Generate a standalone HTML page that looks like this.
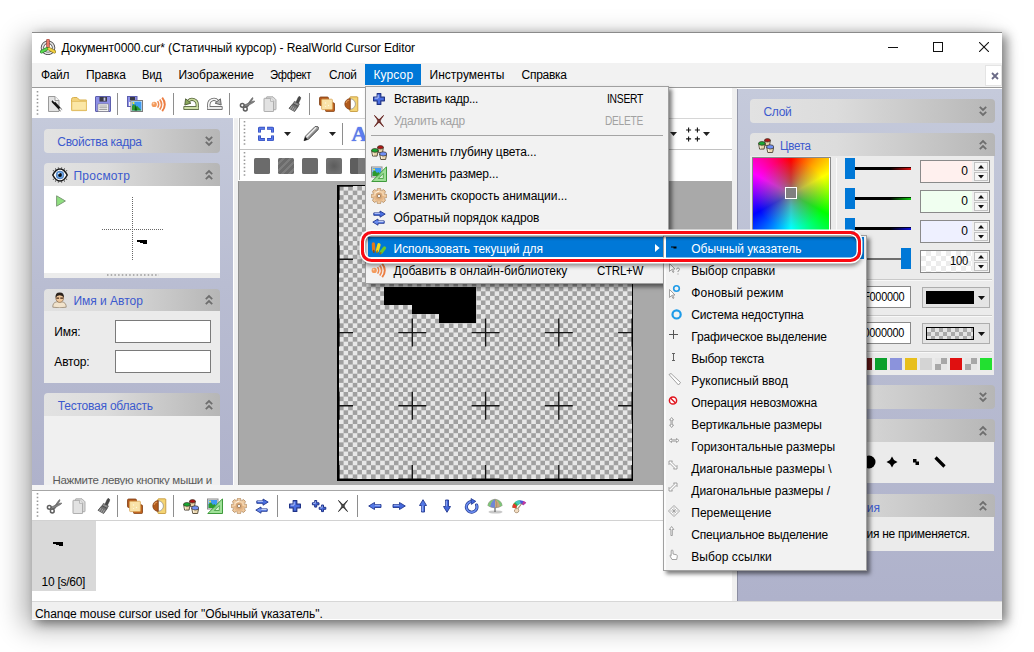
<!DOCTYPE html>
<html lang="ru"><head><meta charset="utf-8"><title>RealWorld Cursor Editor</title><style>
html,body{margin:0;padding:0;background:#fff;}
body{width:1034px;height:652px;overflow:hidden;position:relative;font-family:"Liberation Sans",sans-serif;}
.b{position:absolute;box-sizing:border-box;display:block;}
.t{position:absolute;white-space:nowrap;line-height:1;display:block;}
</style></head><body>
<div class="b" style="left:32px;top:32px;width:970px;height:587.5px;background:#fff;box-shadow:5px 3px 10px 0px rgba(0,0,0,.44),-8px 7px 26px 0px rgba(0,0,0,.33);"></div>
<div class="b" style="left:32px;top:32px;width:970px;height:1px;background:#8a8a8a;"></div>
<svg class="b" style="left:40.0px;top:39.0px" width="16" height="16" viewBox="0 0 16 16"><circle cx="8" cy="8.800" r="5.600" fill="none" stroke="#484848" stroke-width="3.400"/><circle cx="8" cy="8.800" r="5.600" fill="none" stroke="#e4e4e4" stroke-width="1.700"/><path d="M8 8v-6.600" stroke="#8a3a30" stroke-width="3.400" stroke-linecap="round"/><path d="M8 8v-6.600" stroke="#e87868" stroke-width="2.300" stroke-linecap="round"/><path d="M7 9.800l-5.400 3" stroke="#2f7a2a" stroke-width="3.300" stroke-linecap="round"/><path d="M7 9.800l-5.400 3" stroke="#58d850" stroke-width="2.200" stroke-linecap="round"/><path d="M9 9.800l5.400 3" stroke="#8a7420" stroke-width="3.300" stroke-linecap="round"/><path d="M9 9.800l5.400 3" stroke="#f2d040" stroke-width="2.200" stroke-linecap="round"/></svg>
<span class="t" style="left:61.4px;top:42.0px;font-size:12px;letter-spacing:-0.072px;color:#000;">Документ0000.cur* (Статичный курсор) - RealWorld Cursor Editor</span>
<div class="b" style="left:888px;top:47px;width:10px;height:1px;background:#111;"></div>
<div class="b" style="left:933px;top:42px;width:10px;height:10px;border:1px solid #111;"></div>
<svg class="b" style="left:979px;top:42px;" width="10" height="10" viewBox="0 0 10 10"><path d="M0 0L10 10M10 0L0 10" stroke="#111" stroke-width="1.100"/></svg>
<div class="b" style="left:32px;top:63px;width:970px;height:24px;background:#f2f2f2;"></div>
<div class="b" style="left:32px;top:87px;width:970px;height:1px;background:#9b9b9b;"></div>
<div class="b" style="left:365px;top:64px;width:56px;height:21px;background:#0078d7;"></div>
<span class="t" style="left:41.2px;top:68.5px;font-size:12px;letter-spacing:-0.300px;color:#000;transform:scaleX(0.9930);transform-origin:0 0;">Файл</span>
<span class="t" style="left:86.0px;top:68.5px;font-size:12px;letter-spacing:-0.147px;color:#000;">Правка</span>
<span class="t" style="left:142.2px;top:68.5px;font-size:12px;letter-spacing:-0.300px;color:#000;transform:scaleX(0.9380);transform-origin:0 0;">Вид</span>
<span class="t" style="left:178.4px;top:68.5px;font-size:12px;letter-spacing:-0.009px;color:#000;">Изображение</span>
<span class="t" style="left:270.3px;top:68.5px;font-size:12px;letter-spacing:-0.300px;color:#000;transform:scaleX(0.9341);transform-origin:0 0;">Эффект</span>
<span class="t" style="left:328.6px;top:68.5px;font-size:12px;letter-spacing:-0.300px;color:#000;transform:scaleX(0.9831);transform-origin:0 0;">Слой</span>
<span class="t" style="left:373.4px;top:68.5px;font-size:12px;letter-spacing:0.138px;color:#fff;">Курсор</span>
<span class="t" style="left:429.6px;top:68.5px;font-size:12px;letter-spacing:0.007px;color:#000;">Инструменты</span>
<span class="t" style="left:521.5px;top:68.5px;font-size:12px;letter-spacing:-0.262px;color:#000;">Справка</span>
<div class="b" style="left:985px;top:65px;width:17px;height:21px;background:#fff;border:1px solid #e4e4e4;"></div>
<svg class="b" style="left:991px;top:72px;" width="8" height="8" viewBox="0 0 8 8"><path d="M1 1L7 7M7 1L1 7" stroke="#6a6a86" stroke-width="1.800"/></svg>
<div class="b" style="left:32px;top:88px;width:700px;height:30px;background:#fff;"></div>
<div class="b" style="left:732px;top:88px;width:5px;height:513px;background:#f0f0f0;"></div>
<svg class="b" style="left:35.5px;top:91px" width="3" height="25"><path d="M1.5 0v25" stroke="#9a9a9a" stroke-width="1.600" stroke-dasharray="1.500 2.200"/></svg>
<svg class="b" style="left:47.0px;top:96.0px" width="16" height="16" viewBox="0 0 16 16"><path d="M1.500 .5h6.500l4 4v11h-10.500z" fill="#e2e2e2" stroke="#9a9a9a"/><path d="M8 .5v4h4" fill="#f6f6f6" stroke="#9a9a9a"/><path d="M6 5.500l7.800 8.300" stroke="#111" stroke-width="2.700" stroke-linecap="round"/><path d="M13 13l1.300 1.400" stroke="#fff" stroke-width="1.700" stroke-linecap="round"/><path d="M6 4l1.500 1.500" stroke="#eee" stroke-width="1.200" stroke-linecap="round"/></svg>
<svg class="b" style="left:71.0px;top:96.0px" width="16" height="16" viewBox="0 0 16 16"><path d="M.5 3.5q0-2 2-2h3.5l2.5 2.5h6.5q.8 0 .8 .8v9q0 .8-.8 .8h-13.7q-.8 0-.8-.8z" fill="#f3d27a" stroke="#d8b04e"/><path d="M.8 5.5h14.6v8.8h-14.6z" fill="#fbe7a6" stroke="#e2bf63" stroke-width=".8"/></svg>
<svg class="b" style="left:95.0px;top:96.0px" width="16" height="16" viewBox="0 0 16 16"><path d="M1 .5h14q.5 0 .5 .5v14q0 .5-.5 .5h-14q-.5 0-.5-.5v-14q0-.5 .5-.5z" fill="#8d8fe6" stroke="#5d5fae"/><rect x="4.5" y="1" width="7.5" height="4.6" fill="#3a3a44"/><rect x="8.6" y="1.6" width="1.8" height="3.2" fill="#c9c9e6"/><rect x="3" y="8" width="10.5" height="7.5" fill="#fbfbfb" stroke="#777" stroke-width=".6"/><path d="M4.3 10h8M4.3 11.8h8M4.3 13.6h8" stroke="#8a8a8a" stroke-width=".9"/></svg>
<svg class="b" style="left:127.0px;top:96.0px" width="16" height="16" viewBox="0 0 16 16"><rect x=".5" y=".5" width="9.5" height="10" fill="#8d8fe6" stroke="#5d5fae"/><rect x="3" y="1" width="5" height="3" fill="#3a3a44"/><rect x="2" y="6" width="6" height="4" fill="#f4f4f4"/><rect x="4" y="4.5" width="11.5" height="11" fill="#f4f4f4" stroke="#7c7c7c"/><rect x="5" y="5.5" width="9.5" height="9" fill="#3f9bf2"/><path d="M5 14.5v-4.5l2-2 2 3 1-1.2 4.5 4.7z" fill="#2c9a2c"/><path d="M7.6 14.5l1-6.5 1.6 6.5z" fill="#0d5a12"/><circle cx="6.5" cy="7" r="1.1" fill="#ffe83a"/></svg>
<svg class="b" style="left:150.6px;top:96.0px" width="16" height="16" viewBox="0 0 16 16"><circle cx="3.2" cy="8.4" r="2.6" fill="#f39a5b"/><circle cx="2.6" cy="7.6" r="1" fill="#fcd4b4"/><path d="M6.6 5.2q2.2 3.2 0 6.4" fill="none" stroke="#ee8950" stroke-width="1.5"/><path d="M8.8 3.4q3.6 5 0 10" fill="none" stroke="#ee8950" stroke-width="1.7"/><path d="M11.2 1.6q5.2 6.8 0 13.6" fill="none" stroke="#ec7d42" stroke-width="1.9"/></svg>
<svg class="b" style="left:182.5px;top:96.0px" width="16" height="16" viewBox="0 0 16 16"><path d="M.8 10.500h15v3h-15z" fill="#cfe0a8" stroke="#56643c" stroke-width=".9"/><path d="M14.200 10.500V8.300A5 5 0 0 0 5.400 5.100" fill="none" stroke="#56643c" stroke-width="3.200"/><path d="M14.200 11V8.300A5 5 0 0 0 5.400 5.100" fill="none" stroke="#c9dc9e" stroke-width="1.600"/><path d="M2.600 2.800l5.300 4.400-6.100 1.800z" fill="#8aa85a" stroke="#4c5a34" stroke-width=".9" stroke-linejoin="round"/></svg>
<svg class="b" style="left:207.0px;top:96.0px" width="16" height="16" viewBox="0 0 16 16"><g transform="translate(16 0) scale(-1 1)"><path d="M.8 10.500h15v3h-15z" fill="#ececec" stroke="#666" stroke-width=".9"/><path d="M14.200 10.500V8.300A5 5 0 0 0 5.400 5.100" fill="none" stroke="#666" stroke-width="3.200"/><path d="M14.200 11V8.300A5 5 0 0 0 5.400 5.100" fill="none" stroke="#f6f6f6" stroke-width="1.600"/><path d="M2.600 2.800l5.300 4.400-6.100 1.800z" fill="#b4b4b4" stroke="#5c5c5c" stroke-width=".9" stroke-linejoin="round"/></g></svg>
<svg class="b" style="left:238.6px;top:96.0px" width="16" height="16" viewBox="0 0 16 16"><path d="M6.300 11.300L12.600 2.600q.9-1.300 1.200-.9.300 .5-.3 1.900L8.700 11z" fill="#7a7a7a" stroke="#5c5c5c" stroke-width=".6"/><path d="M4.800 9.200L14 5.300q1.500-.6 1.700-.2.100 .6-1.200 1.400L6.600 11z" fill="#868686" stroke="#5c5c5c" stroke-width=".6"/><circle cx="3.300" cy="9.300" r="1.900" fill="none" stroke="#606060" stroke-width="1.500"/><circle cx="6.300" cy="13" r="1.900" fill="none" stroke="#606060" stroke-width="1.500"/></svg>
<svg class="b" style="left:262.4px;top:96.0px" width="16" height="16" viewBox="0 0 16 16"><path d="M5 .8h6l3 3v9.400q0 .5-.5 .5h-8.500q-.5 0-.5-.5v-11.900q0-.5 .5-.5z" fill="#dcdcdc" stroke="#a6a6a6" stroke-width=".9"/><path d="M2.600 2.300h6l3 3v9.700q0 .6-.6 .6h-8.400q-.6 0-.6-.6v-12.100q0-.6 .6-.6z" fill="#e2e2e2" stroke="#a2a2a2" stroke-width=".9"/><path d="M8.600 2.300v3h3" fill="#f4f4f4" stroke="#a6a6a6" stroke-width=".8"/></svg>
<svg class="b" style="left:286.8px;top:96.0px" width="16" height="16" viewBox="0 0 16 16"><path d="M12.6 .6q1.6 .6 .9 2.2l-2.2 4.6-2.3-1.1 2.2-4.7q.5-1.3 1.4-1z" fill="#4a4a4a" stroke="#333" stroke-width=".6"/><path d="M7.4 5.4l5 2.5-1.2 2.4-5-2.5z" fill="#8b8b8b" stroke="#444" stroke-width=".7"/><path d="M5.8 7.8l5.4 2.7-3.6 5-5.6-3.2z" fill="#6f6f6f" stroke="#3c3c3c" stroke-width=".7"/><path d="M5 10l-1.600 3M6.800 10.800l-1.800 3.400M8.600 11.700l-1.800 3.200" stroke="#bdbdbd" stroke-width=".7"/></svg>
<svg class="b" style="left:318.7px;top:96.0px" width="16" height="16" viewBox="0 0 16 16"><rect x=".5" y="1" width="9" height="8.500" rx="1.200" fill="#b45a1e" stroke="#7e3d12" stroke-width=".8"/><rect x="6.500" y="6.800" width="9" height="8.800" rx="1.200" fill="#c0621e" stroke="#7e3d12" stroke-width=".8"/><rect x="2.600" y="3.200" width="10.800" height="10.400" rx=".8" fill="#f9e2a8" stroke="#d9a556" stroke-width=".8"/><circle cx="6.500" cy="7" r=".7" fill="#fff8dc"/><circle cx="9.500" cy="9.500" r=".7" fill="#fff8dc"/><circle cx="6.500" cy="10.500" r=".6" fill="#fff8dc"/></svg>
<svg class="b" style="left:342.5px;top:96.0px" width="16" height="16" viewBox="0 0 16 16"><rect x="6.800" y=".8" width="8" height="14.700" rx=".8" fill="#f4d474" stroke="#c09030" stroke-width=".8"/><path d="M7.200 2.800a5.200 5.200 0 0 1 0 10.400z" fill="#fff" stroke="#8a8a8a" stroke-width=".7"/><path d="M7.200 2.600a5.400 5.400 0 0 0 0 10.800z" fill="#b05a1c" stroke="#7c3b12" stroke-width=".7"/><path d="M6.200 4a4 4 0 0 0-3.200 2.800" stroke="#e09858" stroke-width="1.100" fill="none"/></svg>
<div class="b" style="left:116.9px;top:93px;width:1px;height:22px;background:#8e8e8e;"></div>
<div class="b" style="left:173.0px;top:93px;width:1px;height:22px;background:#8e8e8e;"></div>
<div class="b" style="left:228.5px;top:93px;width:1px;height:22px;background:#8e8e8e;"></div>
<div class="b" style="left:308.8px;top:93px;width:1px;height:22px;background:#8e8e8e;"></div>
<div class="b" style="left:32px;top:118px;width:201px;height:367px;background:linear-gradient(180deg,#c5cadb 0%,#b9bdd2 45%,#afb2cb 100%);"></div>
<div class="b" style="left:233px;top:118px;width:1px;height:367px;background:#fff;"></div>
<div class="b" style="left:234px;top:118px;width:4px;height:367px;background:#f0f0f0;"></div>
<div class="b" style="left:44.3px;top:129px;width:176.2px;height:24px;background:linear-gradient(90deg,#e2e2e2 0%,#dcdcdc 35%,#b6b6b6 100%);border-radius:4px;"></div>
<span class="t" style="left:57.3px;top:136.1px;font-size:12px;letter-spacing:-0.300px;color:#3c5ace;">Свойства кадра</span>
<svg class="b" style="left:203px;top:134px" width="12" height="14" viewBox="-6 -7 12 14"><path d="M-3.2 -4.2L0 -1L3.2 -4.2M-3.2 0.8L0 4L3.2 0.8" fill="none" stroke="#6e6e6e" stroke-width="1.8"/></svg>
<div class="b" style="left:44.3px;top:163px;width:176.2px;height:23px;background:linear-gradient(90deg,#e2e2e2 0%,#dcdcdc 35%,#b6b6b6 100%);border-radius:4px 4px 0 0;"></div>
<svg class="b" style="left:51.7px;top:166.7px" width="16" height="16" viewBox="0 0 16 16"><path d="M.8 8q3-6 7.200-6 4.200 0 7.200 6-3 6-7.200 6-4.200 0-7.200-6z" fill="#fff" stroke="#1a1a1a" stroke-width="1.600"/><path d="M2 4.500l-1-1.500M4 3l-.6-1.800M6.500 2l-.2-1.800M9.500 2l.2-1.800M12 3l.6-1.800M14 4.500l1-1.500M2 11.500l-1 1.500M4 13l-.6 1.800M6.500 14l-.2 1.800M9.500 14l.2 1.800M12 13l.6 1.800M14 11.500l1 1.500" stroke="#333" stroke-width=".7"/><circle cx="8" cy="8" r="3.900" fill="#6aa4e6" stroke="#2e5c9c" stroke-width=".6"/><circle cx="8" cy="8" r="1.900" fill="#0c0c0c"/><circle cx="6.800" cy="6.600" r=".8" fill="#e8f2ff"/></svg>
<span class="t" style="left:73.5px;top:169.6px;font-size:12px;letter-spacing:0.228px;color:#3c5ace;">Просмотр</span>
<svg class="b" style="left:203px;top:168px" width="12" height="14" viewBox="-6 -7 12 14"><path d="M-3.2 -0.8L0 -4L3.2 -0.8M-3.2 4.2L0 1L3.2 4.2" fill="none" stroke="#6e6e6e" stroke-width="1.8"/></svg>
<div class="b" style="left:44.3px;top:186px;width:176.2px;height:87px;background:#fff;"></div>
<div class="b" style="left:44.3px;top:273px;width:176.2px;height:4.5px;background:#ececec;"></div>
<svg class="b" style="left:56px;top:195px;" width="10" height="12" viewBox="0 0 10 12"><path d="M.6 .8l8.800 5.200-8.800 5.200z" fill="#8fdf7f" stroke="#7d9a78" stroke-width="1"/></svg>
<svg class="b" style="left:100px;top:196px" width="66" height="66"><path d="M32.500 1v64" stroke="#666" stroke-width="1" stroke-dasharray="1 1"/><path d="M2 33.500h62" stroke="#666" stroke-width="1" stroke-dasharray="1 1"/></svg>
<svg class="b" style="left:137px;top:239.8px;" width="10" height="4" viewBox="0 0 10 4"><path d="M0 0h10v4h-4v-1h-3v-1h-3z" fill="#000"/></svg>
<svg class="b" style="left:107px;top:273px" width="52" height="4"><path d="M0 2h52" stroke="#9a9a9a" stroke-width="1.500" stroke-dasharray="1.500 2.200"/></svg>
<div class="b" style="left:44.3px;top:288.5px;width:176.2px;height:22.5px;background:linear-gradient(90deg,#e2e2e2 0%,#dcdcdc 35%,#b6b6b6 100%);border-radius:4px 4px 0 0;"></div>
<svg class="b" style="left:51.7px;top:292.0px" width="16" height="16" viewBox="0 0 16 16"><path d="M.8 15.200q-.3-4.700 4-5.400h5q4.600 .7 4.400 5.400-6.700 1.200-13.400 0z" fill="#f1e3cc" stroke="#8a7a66" stroke-width=".7"/><ellipse cx="7.700" cy="6" rx="3.900" ry="4.400" fill="#f0c79a" stroke="#7a5a3a" stroke-width=".6"/><path d="M3.600 5.800q-.6-5.300 4.100-5.300 4.700 0 4.100 5.300-1-2.600-4.100-2.600-3.100 0-4.100 2.600z" fill="#2a211b"/><path d="M4.300 6.200h2.800M8.300 6.200h2.800" stroke="#4a2f1f" stroke-width="1.200"/></svg>
<span class="t" style="left:73.4px;top:294.8px;font-size:12px;letter-spacing:-0.007px;color:#3c5ace;">Имя и Автор</span>
<svg class="b" style="left:203px;top:293px" width="12" height="14" viewBox="-6 -7 12 14"><path d="M-3.2 -0.8L0 -4L3.2 -0.8M-3.2 4.2L0 1L3.2 4.2" fill="none" stroke="#6e6e6e" stroke-width="1.8"/></svg>
<div class="b" style="left:44.3px;top:311px;width:176.2px;height:71.5px;background:#ebebeb;"></div>
<span class="t" style="left:54.3px;top:325.8px;font-size:12px;letter-spacing:-0.136px;color:#000;">Имя:</span>
<span class="t" style="left:54.3px;top:356.1px;font-size:12px;letter-spacing:-0.152px;color:#000;">Автор:</span>
<div class="b" style="left:115px;top:320px;width:96px;height:23px;background:#fff;border:1px solid #7a7a7a;"></div>
<div class="b" style="left:115px;top:350px;width:96px;height:23px;background:#fff;border:1px solid #7a7a7a;"></div>
<div class="b" style="left:44.3px;top:393.3px;width:176.2px;height:22.7px;background:linear-gradient(90deg,#e2e2e2 0%,#dcdcdc 35%,#b6b6b6 100%);border-radius:4px 4px 0 0;"></div>
<span class="t" style="left:57.8px;top:399.8px;font-size:12px;letter-spacing:-0.223px;color:#3c5ace;">Тестовая область</span>
<svg class="b" style="left:203px;top:398px" width="12" height="14" viewBox="-6 -7 12 14"><path d="M-3.2 -0.8L0 -4L3.2 -0.8M-3.2 4.2L0 1L3.2 4.2" fill="none" stroke="#6e6e6e" stroke-width="1.8"/></svg>
<div class="b" style="left:44.3px;top:416px;width:176.2px;height:69px;background:#f0f0f0;"></div>
<span class="t" style="left:52.4px;top:474.7px;font-size:11.5px;letter-spacing:-0.294px;color:#5a5a5a;">Нажмите левую кнопку мыши и</span>
<div class="b" style="left:239px;top:118px;width:493px;height:62px;background:#fff;"></div>
<div class="b" style="left:239px;top:118px;width:493px;height:1px;background:#d6d6d6;"></div>
<div class="b" style="left:239px;top:149px;width:493px;height:1px;background:#c2c2c2;"></div>
<div class="b" style="left:238.5px;top:118px;width:1px;height:62px;background:#b4b4b4;"></div>
<svg class="b" style="left:243px;top:121px" width="3" height="26"><path d="M1.5 0v26" stroke="#9a9a9a" stroke-width="1.600" stroke-dasharray="1.500 2.200"/></svg>
<svg class="b" style="left:243px;top:152px" width="3" height="26"><path d="M1.5 0v26" stroke="#9a9a9a" stroke-width="1.600" stroke-dasharray="1.500 2.200"/></svg>
<svg class="b" style="left:258.0px;top:126.0px" width="16" height="16" viewBox="0 0 16 16"><path d="M1.500 6.600V2.300H6.900M9.100 2.300H14.500V6.600M14.500 9.400V13.600H9.100M6.900 13.600H1.500V9.400" fill="none" stroke="#2c46b4" stroke-width="3" stroke-linejoin="round"/><path d="M1.500 6.300V2.300H6.600M9.400 2.300H14.500V6.300M14.500 9.700V13.600H9.400M6.600 13.600H1.500V9.700" fill="none" stroke="#5878ea" stroke-width="1.700"/></svg>
<svg class="b" style="left:283.9px;top:132.0px" width="7" height="4" viewBox="0 0 7 4"><path d="M0 0h7l-3.5 4z" fill="#222"/></svg>
<svg class="b" style="left:303.0px;top:126.0px" width="16" height="16" viewBox="0 0 16 16"><path d="M1 14.700L2.440 10.140L12.040 .540Q14.500 -.3 15.400 1.200Q16 2.600 15.160 3.660L5.560 13.260Z" fill="#9c9c9c" stroke="#4a4a4a" stroke-width=".8" stroke-linejoin="round"/><path d="M4 10.600L12.800 1.800" stroke="#ececec" stroke-width="1.500" stroke-linecap="round"/><path d="M5.600 12.200L14.200 3.600" stroke="#6e6e6e" stroke-width="1" stroke-linecap="round"/><path d="M1 14.700L2.200 11L4.700 13.500z" fill="#111"/></svg>
<svg class="b" style="left:328.8px;top:132.0px" width="7" height="4" viewBox="0 0 7 4"><path d="M0 0h7l-3.5 4z" fill="#222"/></svg>
<div class="b" style="left:341.9px;top:123px;width:1px;height:22px;background:#8e8e8e;"></div>
<span class="t" style="left:351.500px;top:122.500px;font-family:'Liberation Serif',serif;font-weight:bold;font-size:22px;color:#5d7cf0;text-shadow:0 0 1px #2f49b8">A</span>
<svg class="b" style="left:670.0px;top:132.0px" width="7" height="4" viewBox="0 0 7 4"><path d="M0 0h7l-3.5 4z" fill="#222"/></svg>
<svg class="b" style="left:684px;top:125px;" width="18" height="18" viewBox="0 0 18 18"><path d="M4.600 2.500v5M2.100 5h5M13.400 2.500v5M10.900 5h5M4.600 11.400v5M2.100 13.900h5M13.400 11.400v5M10.900 13.900h5" stroke="#111" stroke-width="1.100"/></svg>
<svg class="b" style="left:703.0px;top:132.0px" width="7" height="4" viewBox="0 0 7 4"><path d="M0 0h7l-3.5 4z" fill="#222"/></svg>
<div class="b" style="left:254.3px;top:158.3px;width:15.8px;height:15.6px;background:#6b6b6b;border-radius:1.500px;"></div>
<div class="b" style="left:278.2px;top:158.3px;width:15.8px;height:15.6px;background:repeating-linear-gradient(135deg,#6b6b6b 0 3px,#7d7d7d 3px 5px);border-radius:1.500px;"></div>
<div class="b" style="left:302.3px;top:158.3px;width:15.8px;height:15.6px;background:#6b6b6b;border-radius:1.500px;"></div>
<div class="b" style="left:326px;top:158.3px;width:15.8px;height:15.6px;background:radial-gradient(circle,#5c5c5c 0,#707070 70%);border-radius:1.500px;"></div>
<div class="b" style="left:350.4px;top:158.3px;width:15.8px;height:15.6px;background:linear-gradient(90deg,#5e5e5e 50%,#787878 50%);border-radius:1.500px;"></div>
<div class="b" style="left:238px;top:180.5px;width:494px;height:304.5px;background:#a9a9a9;"></div>
<div class="b" style="left:238px;top:180.5px;width:1px;height:304.5px;background:#909090;"></div>
<div class="b" style="left:336.8px;top:184.7px;width:296.4px;height:296.1px;background:#000;"></div>
<div class="b" style="left:338.5px;top:186.1px;width:293.1px;height:293.1px;background-color:#e7e7e7;background-image:conic-gradient(transparent 25%,#a0a0a0 0 50%,transparent 0 75%,#a0a0a0 0);background-size:9.1594px 9.1594px;"></div>
<div class="b" style="left:384.3px;top:286.9px;width:91.6px;height:18.3px;background:#000;"></div>
<div class="b" style="left:411.8px;top:305.2px;width:64.1px;height:9.2px;background:#000;"></div>
<div class="b" style="left:439.3px;top:314.3px;width:36.6px;height:9.2px;background:#000;"></div>
<svg class="b" style="left:338.5px;top:186.1px" width="293.1" height="293.1" viewBox="0 0 293.1 293.1"><path d="M-14.0 0.0h28M0.0 -14.0v28M-14.0 73.3h28M0.0 59.3v28M-14.0 146.6h28M0.0 132.6v28M-14.0 219.8h28M0.0 205.8v28M-14.0 293.1h28M0.0 279.1v28M59.3 0.0h28M73.3 -14.0v28M59.3 73.3h28M73.3 59.3v28M59.3 146.6h28M73.3 132.6v28M59.3 219.8h28M73.3 205.8v28M59.3 293.1h28M73.3 279.1v28M132.6 0.0h28M146.6 -14.0v28M132.6 73.3h28M146.6 59.3v28M132.6 146.6h28M146.6 132.6v28M132.6 219.8h28M146.6 205.8v28M132.6 293.1h28M146.6 279.1v28M205.8 0.0h28M219.8 -14.0v28M205.8 73.3h28M219.8 59.3v28M205.8 146.6h28M219.8 132.6v28M205.8 219.8h28M219.8 205.8v28M205.8 293.1h28M219.8 279.1v28M279.1 0.0h28M293.1 -14.0v28M279.1 73.3h28M293.1 59.3v28M279.1 146.6h28M293.1 132.6v28M279.1 219.8h28M293.1 205.8v28M279.1 293.1h28M293.1 279.1v28" stroke="#141414" stroke-width="1.350" fill="none"/></svg>
<div class="b" style="left:32px;top:485px;width:705px;height:5px;background:#f4f4f4;"></div>
<div class="b" style="left:32px;top:490px;width:705px;height:1px;background:#a6a6a6;"></div>
<div class="b" style="left:32px;top:491px;width:700px;height:29px;background:#fff;"></div>
<div class="b" style="left:32px;top:520px;width:700px;height:1px;background:#d2d2d2;"></div>
<svg class="b" style="left:35.5px;top:493px" width="3" height="25"><path d="M1.5 0v25" stroke="#9a9a9a" stroke-width="1.600" stroke-dasharray="1.500 2.200"/></svg>
<svg class="b" style="left:46.3px;top:497.7px" width="16" height="16" viewBox="0 0 16 16"><path d="M6.300 11.300L12.600 2.600q.9-1.300 1.200-.9.300 .5-.3 1.900L8.700 11z" fill="#7a7a7a" stroke="#5c5c5c" stroke-width=".6"/><path d="M4.800 9.200L14 5.300q1.500-.6 1.700-.2.100 .6-1.200 1.400L6.600 11z" fill="#868686" stroke="#5c5c5c" stroke-width=".6"/><circle cx="3.300" cy="9.300" r="1.900" fill="none" stroke="#606060" stroke-width="1.500"/><circle cx="6.300" cy="13" r="1.900" fill="none" stroke="#606060" stroke-width="1.500"/></svg>
<svg class="b" style="left:71.0px;top:497.7px" width="16" height="16" viewBox="0 0 16 16"><path d="M5 .8h6l3 3v9.400q0 .5-.5 .5h-8.500q-.5 0-.5-.5v-11.900q0-.5 .5-.5z" fill="#dcdcdc" stroke="#a6a6a6" stroke-width=".9"/><path d="M2.600 2.300h6l3 3v9.700q0 .6-.6 .6h-8.400q-.6 0-.6-.6v-12.100q0-.6 .6-.6z" fill="#e2e2e2" stroke="#a2a2a2" stroke-width=".9"/><path d="M8.600 2.300v3h3" fill="#f4f4f4" stroke="#a6a6a6" stroke-width=".8"/></svg>
<svg class="b" style="left:95.9px;top:497.7px" width="16" height="16" viewBox="0 0 16 16"><path d="M12.6 .6q1.6 .6 .9 2.2l-2.2 4.6-2.3-1.1 2.2-4.7q.5-1.3 1.4-1z" fill="#4a4a4a" stroke="#333" stroke-width=".6"/><path d="M7.4 5.4l5 2.5-1.2 2.4-5-2.5z" fill="#8b8b8b" stroke="#444" stroke-width=".7"/><path d="M5.8 7.8l5.4 2.7-3.6 5-5.6-3.2z" fill="#6f6f6f" stroke="#3c3c3c" stroke-width=".7"/><path d="M5 10l-1.600 3M6.800 10.800l-1.800 3.400M8.600 11.700l-1.800 3.200" stroke="#bdbdbd" stroke-width=".7"/></svg>
<svg class="b" style="left:127.0px;top:497.7px" width="16" height="16" viewBox="0 0 16 16"><rect x=".5" y="1" width="9" height="8.500" rx="1.200" fill="#b45a1e" stroke="#7e3d12" stroke-width=".8"/><rect x="6.500" y="6.800" width="9" height="8.800" rx="1.200" fill="#c0621e" stroke="#7e3d12" stroke-width=".8"/><rect x="2.600" y="3.200" width="10.800" height="10.400" rx=".8" fill="#f9e2a8" stroke="#d9a556" stroke-width=".8"/><circle cx="6.500" cy="7" r=".7" fill="#fff8dc"/><circle cx="9.500" cy="9.500" r=".7" fill="#fff8dc"/><circle cx="6.500" cy="10.500" r=".6" fill="#fff8dc"/></svg>
<svg class="b" style="left:150.6px;top:497.7px" width="16" height="16" viewBox="0 0 16 16"><rect x="6.800" y=".8" width="8" height="14.700" rx=".8" fill="#f4d474" stroke="#c09030" stroke-width=".8"/><path d="M7.200 2.800a5.200 5.200 0 0 1 0 10.400z" fill="#fff" stroke="#8a8a8a" stroke-width=".7"/><path d="M7.200 2.600a5.400 5.400 0 0 0 0 10.800z" fill="#b05a1c" stroke="#7c3b12" stroke-width=".7"/><path d="M6.200 4a4 4 0 0 0-3.200 2.800" stroke="#e09858" stroke-width="1.100" fill="none"/></svg>
<svg class="b" style="left:182.5px;top:497.7px" width="16" height="16" viewBox="0 0 16 16"><path d="M6.600 3.400h5.800l-.9 5.200h-4z" fill="#e8d4aa" stroke="#3c3222" stroke-width=".8"/><ellipse cx="9.500" cy="3.300" rx="2.900" ry="1.700" fill="#b01414" stroke="#3c3222" stroke-width=".7"/><path d="M.6 6.500h6.500l-1 5.600h-4.500z" fill="#e8d4aa" stroke="#3c3222" stroke-width=".8"/><ellipse cx="3.850" cy="6.400" rx="3.250" ry="1.900" fill="#18a832" stroke="#3c3222" stroke-width=".7"/><path d="M8.600 10h7.200l-1.200 5.500h-4.800z" fill="#ecd9b2" stroke="#3c3222" stroke-width=".8"/><ellipse cx="12.200" cy="9.900" rx="3.600" ry="2.100" fill="#7090f4" stroke="#3c3222" stroke-width=".7"/><path d="M10.200 11.800l.5 3M2 8.500l.5 3" stroke="#fff6e0" stroke-width=".9"/></svg>
<svg class="b" style="left:207.0px;top:497.7px" width="16" height="16" viewBox="0 0 16 16"><rect x=".5" y="1" width="10.500" height="10" fill="#eaeaea" stroke="#8c8c8c"/><rect x="1.500" y="2" width="8.500" height="8" fill="#3f9bf2"/><path d="M1.500 10v-4l2.500-1.500 2 2.500 1.500-1 2.500 4z" fill="#2c9a2c"/><circle cx="3" cy="3.500" r="1" fill="#ffe83a"/><path d="M15.500 .8v14.700h-14.700z" fill="#8edc86" fill-opacity=".85" stroke="#3f9a3c" stroke-width="1"/><path d="M12.300 7.500v5h-5z" fill="#d8f2d4" stroke="#3f9a3c" stroke-width=".8"/></svg>
<svg class="b" style="left:231.3px;top:497.7px" width="16" height="16" viewBox="0 0 16 16"><g transform="translate(8 8)"><g fill="#efcaa0" stroke="#a97f52" stroke-width=".7"><rect x="-1.800" y="-7.800" width="3.600" height="15.600" rx="1"/><rect x="-1.800" y="-7.800" width="3.600" height="15.600" rx="1" transform="rotate(45)"/><rect x="-1.800" y="-7.800" width="3.600" height="15.600" rx="1" transform="rotate(90)"/><rect x="-1.800" y="-7.800" width="3.600" height="15.600" rx="1" transform="rotate(135)"/></g><circle r="5.500" fill="#f3d3ad"/><path d="M-5.500 0a5.500 5.500 0 0 0 11 0z" fill="#e6b98a"/><circle r="3.400" fill="#d9a878"/><circle r="1.700" fill="#f4f4f4" stroke="#8f6a44" stroke-width=".7"/><path d="M-3.800 -2.500a4.500 4.500 0 0 1 4 -2.200" stroke="#fff3e0" stroke-width="1" fill="none"/></g></svg>
<svg class="b" style="left:254.3px;top:497.7px" width="16" height="16" viewBox="0 0 16 16"><path d="M2.800 2.900h6.200v-1.900l5.200 3.100-5.200 3.100v-1.900h-6.200z" fill="#4a6fe0" stroke="#22388e" stroke-width=".9" stroke-linejoin="round"/><path d="M13.200 10.900h-6.200v-1.900l-5.200 3.100 5.200 3.100v-1.900h6.200z" fill="#6a8cf0" stroke="#22388e" stroke-width=".9" stroke-linejoin="round"/><path d="M3.500 3.500h5.500" stroke="#c2d0ff" stroke-width=".8"/><path d="M7.300 11.500h5.300" stroke="#dbe4ff" stroke-width=".8"/></svg>
<svg class="b" style="left:287.0px;top:497.7px" width="16" height="16" viewBox="0 0 16 16"><path d="M6.200 2.600h3.600v3.600h3.600v3.600h-3.600v3.600h-3.600v-3.600h-3.600v-3.600h3.600z" fill="#4a6ee0" stroke="#1f3388" stroke-width="1.200" stroke-linejoin="round"/><path d="M7.100 3.700v3.400h-3.400" stroke="#b8c9ff" stroke-width="1" fill="none"/></svg>
<svg class="b" style="left:311.0px;top:497.7px" width="16" height="16" viewBox="0 0 16 16"><g fill="#4468dc" stroke="#1f3388" stroke-width="1" stroke-linejoin="round"><path d="M3.700 2.500h2v2.300h2.300v2h-2.300v2.300h-2v-2.300h-2.300v-2h2.300z"/><path d="M10.500 7h2v2.300h2.300v2h-2.300v2.300h-2v-2.300h-2.300v-2h2.300z"/></g><path d="M4.300 3.200v2.200h-2.200" stroke="#b8c9ff" stroke-width=".8" fill="none"/><path d="M11.100 7.700v2.200h-2.200" stroke="#b8c9ff" stroke-width=".8" fill="none"/></svg>
<svg class="b" style="left:335.0px;top:497.7px" width="16" height="16" viewBox="0 0 16 16"><path d="M3.500 2.500q3.500 3 4.500 4.500 1-1.500 4.500-4.500-2.700 3.500-3.600 5.500 .9 2 3.600 5.500-3.500-3-4.500-4.500-1 1.500-4.500 4.500 2.700-3.500 3.600-5.500-.9-2-3.600-5.500z" fill="#4a4a4a" stroke="#3a3a3a" stroke-width="1" stroke-linejoin="round"/></svg>
<svg class="b" style="left:367.0px;top:497.7px" width="16" height="16" viewBox="0 0 16 16"><path d="M14 6.500h-6.500v-2l-5.800 3.500 5.800 3.500v-2h6.500z" fill="#5378e6" stroke="#22388e" stroke-width=".9" stroke-linejoin="round"/><path d="M7.800 7.200h5.500" stroke="#c2d0ff" stroke-width=".8"/></svg>
<svg class="b" style="left:390.6px;top:497.7px" width="16" height="16" viewBox="0 0 16 16"><path d="M2 6.500h6.500v-2l5.800 3.500-5.800 3.500v-2h-6.500z" fill="#4468dc" stroke="#22388e" stroke-width=".9" stroke-linejoin="round"/><path d="M2.700 7.200h5.500" stroke="#c2d0ff" stroke-width=".8"/></svg>
<svg class="b" style="left:415.0px;top:497.7px" width="16" height="16" viewBox="0 0 16 16"><path d="M6.500 14v-6.500h-2l3.500-5.800 3.500 5.800h-2v6.500z" fill="#5378e6" stroke="#22388e" stroke-width=".9" stroke-linejoin="round"/><path d="M7.200 7.800v5.500" stroke="#c2d0ff" stroke-width=".8"/></svg>
<svg class="b" style="left:439.3px;top:497.7px" width="16" height="16" viewBox="0 0 16 16"><path d="M6.500 2v6.500h-2l3.500 5.800 3.500-5.800h-2v-6.500z" fill="#4468dc" stroke="#22388e" stroke-width=".9" stroke-linejoin="round"/><path d="M7.200 2.700v5.500" stroke="#c2d0ff" stroke-width=".8"/></svg>
<svg class="b" style="left:463.0px;top:497.7px" width="16" height="16" viewBox="0 0 16 16"><path d="M9.200 3.600a5.300 5.300 0 1 0 4.400 3.400" fill="none" stroke="#22388e" stroke-width="3.100" stroke-linecap="round"/><path d="M9.200 3.600a5.300 5.300 0 1 0 4.400 3.400" fill="none" stroke="#6a8cf0" stroke-width="1.700" stroke-linecap="round"/><path d="M8 .6l4.800 2.700-4.400 3.100z" fill="#4468dc" stroke="#22388e" stroke-width=".8" stroke-linejoin="round"/></svg>
<svg class="b" style="left:486.7px;top:497.7px" width="16" height="16" viewBox="0 0 16 16"><ellipse cx="8.500" cy="14" rx="7" ry="1.600" fill="#9a9a9a" fill-opacity=".55"/><path d="M8 8v6" stroke="#555" stroke-width="1.100"/><path d="M.8 7.500q1-5.500 7.200-6.300 6.200 .8 7.200 6.300-3 2.300-7.200 2.300-4.200 0-7.200-2.300z" fill="#c9a77c" stroke="#777" stroke-width=".5"/><path d="M8 1.200q-4 1.500-5 7.300 2.400 1.200 5 1.300z" fill="#6f86d6"/><path d="M8 1.200q-6 .8-7.200 6.300l2.200 1.200q1-5.800 5-7.500z" fill="#7cc47a"/><path d="M8 1.200q4 1.500 5 7.300 1.400-.5 2.200-1-1-5.500-7.200-6.300z" fill="#7cc47a"/><path d="M8 1.200q2.600 3 1.600 8.500" fill="none" stroke="#8f7a5c" stroke-width=".5"/></svg>
<svg class="b" style="left:510.5px;top:497.7px" width="16" height="16" viewBox="0 0 16 16"><path d="M1.300 9.500q.8-6.500 7.400-7.300l1 3.600q-3.600 .5-4.400 4.600z" fill="#2fb24a"/><path d="M1.300 9.500q.3-2.600 1.600-4.200l3 2.600q-.5 .8-.6 2.500z" fill="#e8392e"/><path d="M4 4q1.800-1.500 4.700-1.800l1 3.600q-1.800 .2-2.900 1.200z" fill="#46c7c2"/><path d="M8.700 2.200q3.800-.2 6.500 2.600l-3 2.500q-1-1.500-2.500-1.500z" fill="#4a55d8"/><path d="M12.300 3q1.900 .6 2.900 1.800l-3 2.500q-.4-.6-1-1z" fill="#c6399c"/><path d="M10.800 5.500l-3.600 5.300q1.200 1.800 .2 3.200-1.300 1.400-3 .5-1.500-1-.8-2.700 .8-1.500 2.800-1.300z" fill="#f3dcc0" stroke="#8a6e4d" stroke-width=".6"/></svg>
<div class="b" style="left:116.9px;top:495px;width:1px;height:22px;background:#8e8e8e;"></div>
<div class="b" style="left:173.0px;top:495px;width:1px;height:22px;background:#8e8e8e;"></div>
<div class="b" style="left:277.2px;top:495px;width:1px;height:22px;background:#8e8e8e;"></div>
<div class="b" style="left:356.9px;top:495px;width:1px;height:22px;background:#8e8e8e;"></div>
<div class="b" style="left:32px;top:521px;width:64px;height:70px;background:#d9d9d9;"></div>
<svg class="b" style="left:53.4px;top:541.6px;" width="10" height="4" viewBox="0 0 10 4"><path d="M0 0h10v4h-4v-1h-3v-1h-3z" fill="#000"/></svg>
<span class="t" style="left:41.6px;top:575.6px;font-size:12px;letter-spacing:-0.279px;color:#000;">10 [s/60]</span>
<div class="b" style="left:32px;top:601px;width:970px;height:18px;background:#f0f0f0;border-top:1px solid #d7d7d7;overflow:hidden;"></div>
<div class="b" style="left:32px;top:601px;width:970px;height:18px;overflow:hidden">
<span class="t" style="left:3.0px;top:7.1px;font-size:12px;letter-spacing:-0.072px;color:#000;">Change mouse cursor used for &quot;Обычный указатель&quot;.</span>
</div>
<div class="b" style="left:737px;top:89px;width:265px;height:512px;background:linear-gradient(180deg,#c5cadb 0%,#b9bdd2 45%,#afb2cb 100%);"></div>
<div class="b" style="left:737px;top:89px;width:1px;height:512px;background:rgba(110,112,130,.55);"></div>
<div class="b" style="left:750px;top:98.7px;width:245px;height:24.3px;background:linear-gradient(90deg,#e2e2e2 0%,#dcdcdc 35%,#b6b6b6 100%);border-radius:4px;"></div>
<span class="t" style="left:763.5px;top:105.8px;font-size:12px;letter-spacing:-0.300px;color:#3c5ace;">Слой</span>
<svg class="b" style="left:977px;top:104px" width="12" height="14" viewBox="-6 -7 12 14"><path d="M-3.2 -4.2L0 -1L3.2 -4.2M-3.2 0.8L0 4L3.2 0.8" fill="none" stroke="#6e6e6e" stroke-width="1.8"/></svg>
<div class="b" style="left:750px;top:133px;width:245px;height:23px;background:linear-gradient(90deg,#e2e2e2 0%,#dcdcdc 35%,#b6b6b6 100%);border-radius:4px 4px 0 0;"></div>
<svg class="b" style="left:758.0px;top:136.5px" width="16" height="16" viewBox="0 0 16 16"><path d="M6.600 3.400h5.800l-.9 5.200h-4z" fill="#e8d4aa" stroke="#3c3222" stroke-width=".8"/><ellipse cx="9.500" cy="3.300" rx="2.900" ry="1.700" fill="#b01414" stroke="#3c3222" stroke-width=".7"/><path d="M.6 6.500h6.500l-1 5.600h-4.500z" fill="#e8d4aa" stroke="#3c3222" stroke-width=".8"/><ellipse cx="3.850" cy="6.400" rx="3.250" ry="1.900" fill="#18a832" stroke="#3c3222" stroke-width=".7"/><path d="M8.600 10h7.200l-1.200 5.500h-4.800z" fill="#ecd9b2" stroke="#3c3222" stroke-width=".8"/><ellipse cx="12.200" cy="9.900" rx="3.600" ry="2.100" fill="#7090f4" stroke="#3c3222" stroke-width=".7"/><path d="M10.200 11.800l.5 3M2 8.500l.5 3" stroke="#fff6e0" stroke-width=".9"/></svg>
<span class="t" style="left:779.6px;top:139.8px;font-size:12px;letter-spacing:-0.300px;color:#3c5ace;transform:scaleX(0.9619);transform-origin:0 0;">Цвета</span>
<svg class="b" style="left:977px;top:138px" width="12" height="14" viewBox="-6 -7 12 14"><path d="M-3.2 -0.8L0 -4L3.2 -0.8M-3.2 4.2L0 1L3.2 4.2" fill="none" stroke="#6e6e6e" stroke-width="1.8"/></svg>
<div class="b" style="left:750px;top:156px;width:244px;height:218.5px;background:#ebebeb;"></div>
<div class="b" style="left:751.5px;top:156.5px;width:79.2px;height:74px;background:#fff;border:1px solid #8a8a8a;"></div>
<div class="b" style="left:753px;top:158px;width:76px;height:71.5px;background:radial-gradient(ellipse 50% 50% at 50% 50%,#808080 0%,rgba(128,128,128,.55) 35%,rgba(128,128,128,0) 95%),conic-gradient(from 0deg at 50% 50%,#ff0000,#ffa000 10%,#ffff00 17%,#00ff00 33%,#00ffff 50%,#0000ff 67%,#ff00ff 83%,#ff0000);"></div>
<div class="b" style="left:784.5px;top:187.3px;width:12px;height:12px;background:#808080;border:1.500px solid #fff;"></div>
<div class="b" style="left:836px;top:158px;width:1px;height:212px;background:#fafafa;"></div>
<div class="b" style="left:855px;top:166.7px;width:56px;height:3.6px;background:linear-gradient(90deg,#000 0%,#000 62%,#e01010 100%);"></div>
<div class="b" style="left:855px;top:166.7px;width:56px;height:1px;background:rgba(0,0,0,.75);"></div>
<div class="b" style="left:845px;top:158px;width:10px;height:21px;background:#0078d7;"></div>
<div class="b" style="left:920px;top:160.3px;width:69.6px;height:22.4px;background:#fff0ee;border:1px solid #8a8a8a;"></div>
<div class="b" style="left:972px;top:161.3px;width:16.6px;height:20.4px;background:#f0f0f0;"></div>
<div class="b" style="left:973.5px;top:162px;width:14px;height:9.2px;background:#f6f6f6;border:1px solid #c2c2c2;"></div>
<div class="b" style="left:973.5px;top:171.8px;width:14px;height:9.2px;background:#f6f6f6;border:1px solid #c2c2c2;"></div>
<svg class="b" style="left:977.5px;top:165px;" width="6" height="3.5" viewBox="0 0 6 3.5"><path d="M0 3.500h6l-3-3.500z" fill="#111"/></svg>
<svg class="b" style="left:977.5px;top:175px;" width="6" height="3.5" viewBox="0 0 6 3.5"><path d="M0 0h6l-3 3.500z" fill="#111"/></svg>
<span class="t" style="left:961.3px;top:164.7px;font-size:12px;letter-spacing:-0.000px;color:#000;">0</span>
<div class="b" style="left:855px;top:196.7px;width:56px;height:3.6px;background:linear-gradient(90deg,#000 0%,#000 62%,#10d010 100%);"></div>
<div class="b" style="left:855px;top:196.7px;width:56px;height:1px;background:rgba(0,0,0,.75);"></div>
<div class="b" style="left:845px;top:188px;width:10px;height:21px;background:#0078d7;"></div>
<div class="b" style="left:920px;top:190.3px;width:69.6px;height:22.4px;background:#f0fff0;border:1px solid #8a8a8a;"></div>
<div class="b" style="left:972px;top:191.3px;width:16.6px;height:20.4px;background:#f0f0f0;"></div>
<div class="b" style="left:973.5px;top:192px;width:14px;height:9.2px;background:#f6f6f6;border:1px solid #c2c2c2;"></div>
<div class="b" style="left:973.5px;top:201.8px;width:14px;height:9.2px;background:#f6f6f6;border:1px solid #c2c2c2;"></div>
<svg class="b" style="left:977.5px;top:195px;" width="6" height="3.5" viewBox="0 0 6 3.5"><path d="M0 3.500h6l-3-3.500z" fill="#111"/></svg>
<svg class="b" style="left:977.5px;top:205px;" width="6" height="3.5" viewBox="0 0 6 3.5"><path d="M0 0h6l-3 3.500z" fill="#111"/></svg>
<span class="t" style="left:961.3px;top:194.7px;font-size:12px;letter-spacing:-0.000px;color:#000;">0</span>
<div class="b" style="left:855px;top:226.7px;width:56px;height:3.6px;background:linear-gradient(90deg,#000 0%,#000 62%,#1010e0 100%);"></div>
<div class="b" style="left:855px;top:226.7px;width:56px;height:1px;background:rgba(0,0,0,.75);"></div>
<div class="b" style="left:845px;top:218px;width:10px;height:21px;background:#0078d7;"></div>
<div class="b" style="left:920px;top:220.3px;width:69.6px;height:22.4px;background:#eef0ff;border:1px solid #8a8a8a;"></div>
<div class="b" style="left:972px;top:221.3px;width:16.6px;height:20.4px;background:#f0f0f0;"></div>
<div class="b" style="left:973.5px;top:222px;width:14px;height:9.2px;background:#f6f6f6;border:1px solid #c2c2c2;"></div>
<div class="b" style="left:973.5px;top:231.8px;width:14px;height:9.2px;background:#f6f6f6;border:1px solid #c2c2c2;"></div>
<svg class="b" style="left:977.5px;top:225px;" width="6" height="3.5" viewBox="0 0 6 3.5"><path d="M0 3.500h6l-3-3.500z" fill="#111"/></svg>
<svg class="b" style="left:977.5px;top:235px;" width="6" height="3.5" viewBox="0 0 6 3.5"><path d="M0 0h6l-3 3.500z" fill="#111"/></svg>
<span class="t" style="left:961.3px;top:224.7px;font-size:12px;letter-spacing:-0.000px;color:#000;">0</span>
<div class="b" style="left:855px;top:258px;width:50px;height:1.6px;background:#6e6e6e;"></div>
<div class="b" style="left:901px;top:248px;width:10px;height:21px;background:#0078d7;"></div>
<div class="b" style="left:920px;top:250.3px;width:69.6px;height:22.4px;background-color:#fff;background-image:conic-gradient(#ececec 25%,transparent 0 50%,#ececec 0 75%,transparent 0);background-size:10px 10px;border:1px solid #8a8a8a;"></div>
<div class="b" style="left:972px;top:251.3px;width:16.6px;height:20.4px;background:#f0f0f0;"></div>
<div class="b" style="left:973.5px;top:252px;width:14px;height:9.2px;background:#f6f6f6;border:1px solid #c2c2c2;"></div>
<div class="b" style="left:973.5px;top:261.8px;width:14px;height:9.2px;background:#f6f6f6;border:1px solid #c2c2c2;"></div>
<svg class="b" style="left:977.5px;top:255px;" width="6" height="3.5" viewBox="0 0 6 3.5"><path d="M0 3.500h6l-3-3.500z" fill="#111"/></svg>
<svg class="b" style="left:977.5px;top:265px;" width="6" height="3.5" viewBox="0 0 6 3.5"><path d="M0 0h6l-3 3.500z" fill="#111"/></svg>
<span class="t" style="left:949.8px;top:254.7px;font-size:12px;letter-spacing:-0.300px;color:#000;transform:scaleX(0.9382);transform-origin:0 0;">100</span>
<div class="b" style="left:752px;top:279px;width:240px;height:1px;background:#c9c9c9;"></div>
<div class="b" style="left:752px;top:280px;width:240px;height:1px;background:#f8f8f8;"></div>
<div class="b" style="left:752px;top:315px;width:240px;height:1px;background:#c9c9c9;"></div>
<div class="b" style="left:752px;top:316px;width:240px;height:1px;background:#f8f8f8;"></div>
<div class="b" style="left:752px;top:351px;width:240px;height:1px;background:#c9c9c9;"></div>
<div class="b" style="left:752px;top:352px;width:240px;height:1px;background:#f8f8f8;"></div>
<div class="b" style="left:845px;top:286.4px;width:66px;height:22px;background:#fff;border:1px solid #8a8a8a;"></div>
<span class="t" style="left:850.8px;top:290.8px;font-size:12px;letter-spacing:-0.300px;color:#000;transform:scaleX(0.9091);transform-origin:0 0;">#FF000000</span>
<div class="b" style="left:922.4px;top:287.0px;width:67.6px;height:20.6px;background:#e4e4e4;border:1px solid #adadad;"></div>
<div class="b" style="left:926px;top:291.0px;width:48px;height:12.8px;background:#000;"></div>
<svg class="b" style="left:978.0px;top:296.0px" width="7" height="4" viewBox="0 0 7 4"><path d="M0 0h7l-3.5 4z" fill="#111"/></svg>
<div class="b" style="left:845px;top:322.4px;width:66px;height:22px;background:#fff;border:1px solid #8a8a8a;"></div>
<span class="t" style="left:852.1px;top:326.8px;font-size:12px;letter-spacing:-0.300px;color:#000;transform:scaleX(0.9070);transform-origin:0 0;">#00000000</span>
<div class="b" style="left:922.4px;top:323.0px;width:67.6px;height:20.6px;background:#e4e4e4;border:1px solid #adadad;"></div>
<div class="b" style="left:926px;top:327.0px;width:48px;height:12.8px;background-color:#e4e4e4;background-image:conic-gradient(#aaa 25%,transparent 0 50%,#aaa 0 75%,transparent 0);background-size:8px 8px;border:1px solid #000;"></div>
<svg class="b" style="left:978.0px;top:332.0px" width="7" height="4" viewBox="0 0 7 4"><path d="M0 0h7l-3.5 4z" fill="#111"/></svg>
<div class="b" style="left:860px;top:358px;width:12px;height:12px;background:#6e1a1a;"></div>
<div class="b" style="left:875px;top:358px;width:12px;height:12px;background:#0ba02c;"></div>
<div class="b" style="left:890px;top:358px;width:12px;height:12px;background:#8b93dc;"></div>
<div class="b" style="left:905px;top:358px;width:12px;height:12px;background:#e8bf1c;"></div>
<div class="b" style="left:920px;top:358px;width:12px;height:12px;background:#d4d4d4;"></div>
<div class="b" style="left:935px;top:358px;width:12px;height:12px;background-color:#e6e6e6;background-image:conic-gradient(#a8a8a8 25%,transparent 0 50%,#a8a8a8 0 75%,transparent 0);background-size:12px 12px;"></div>
<div class="b" style="left:950px;top:358px;width:12px;height:12px;background:#e01010;"></div>
<div class="b" style="left:965px;top:358px;width:12px;height:12px;background-color:#e6e6e6;background-image:conic-gradient(#a8a8a8 25%,transparent 0 50%,#a8a8a8 0 75%,transparent 0);background-size:12px 12px;"></div>
<div class="b" style="left:980px;top:358px;width:12px;height:12px;background:#22e030;"></div>
<div class="b" style="left:750px;top:384.6px;width:245px;height:24px;background:linear-gradient(90deg,#e2e2e2 0%,#dcdcdc 35%,#b6b6b6 100%);border-radius:4px;"></div>
<svg class="b" style="left:977px;top:389.5px" width="12" height="14" viewBox="-6 -7 12 14"><path d="M-3.2 -4.2L0 -1L3.2 -4.2M-3.2 0.8L0 4L3.2 0.8" fill="none" stroke="#6e6e6e" stroke-width="1.8"/></svg>
<div class="b" style="left:750px;top:418.7px;width:245px;height:23.3px;background:linear-gradient(90deg,#e2e2e2 0%,#dcdcdc 35%,#b6b6b6 100%);border-radius:4px 4px 0 0;"></div>
<svg class="b" style="left:977px;top:423.5px" width="12" height="14" viewBox="-6 -7 12 14"><path d="M-3.2 -0.8L0 -4L3.2 -0.8M-3.2 4.2L0 1L3.2 4.2" fill="none" stroke="#6e6e6e" stroke-width="1.8"/></svg>
<div class="b" style="left:750px;top:442px;width:244px;height:41px;background:#ebebeb;"></div>
<svg class="b" style="left:861px;top:454px;" width="16" height="16" viewBox="0 0 16 16"><circle cx="8" cy="8" r="6.500" fill="#000"/></svg>
<svg class="b" style="left:886px;top:456px;" width="12" height="12" viewBox="0 0 12 12"><path d="M6 .5l2 3.500 3.500 2-3.500 2-2 3.500-2-3.500-3.500-2 3.500-2z" fill="#000"/></svg>
<svg class="b" style="left:912px;top:458px;" width="8" height="8" viewBox="0 0 8 8"><path d="M1 1h3.500v2.500h2.500v3.500h-3.500v-2.500h-2.500z" fill="#000"/></svg>
<svg class="b" style="left:934px;top:456px;" width="12" height="12" viewBox="0 0 12 12"><path d="M1.500 1.500l9 9" stroke="#000" stroke-width="3.200"/></svg>
<div class="b" style="left:750px;top:494px;width:245px;height:22.8px;background:linear-gradient(90deg,#e2e2e2 0%,#dcdcdc 35%,#b6b6b6 100%);border-radius:4px 4px 0 0;"></div>
<span class="t" style="left:800.0px;top:501.5px;font-size:12px;letter-spacing:-0.048px;color:#3c5ace;">Конфигурация</span>
<svg class="b" style="left:977px;top:498.5px" width="12" height="14" viewBox="-6 -7 12 14"><path d="M-3.2 -0.8L0 -4L3.2 -0.8M-3.2 4.2L0 1L3.2 4.2" fill="none" stroke="#6e6e6e" stroke-width="1.8"/></svg>
<div class="b" style="left:750px;top:516.8px;width:244px;height:34.4px;background:#ebebeb;"></div>
<span class="t" style="left:802.2px;top:528.3px;font-size:12px;letter-spacing:-0.300px;color:#000;">Конфигурация не применяется.</span>
<div class="b" style="left:365.4px;top:85.5px;width:303.2px;height:198.5px;background:#f2f2f2;border:1px solid #a0a0a0;box-shadow:3px 3px 4px rgba(0,0,0,.5);"></div>
<div class="b" style="left:371px;top:135.3px;width:292px;height:1px;background:#a5a5a5;"></div>
<div class="b" style="left:368.4px;top:237.4px;width:295px;height:20px;background:#0078d7;"></div>
<svg class="b" style="left:371.0px;top:90.5px" width="16" height="16" viewBox="0 0 16 16"><path d="M6.200 2.600h3.600v3.600h3.600v3.600h-3.600v3.600h-3.600v-3.600h-3.600v-3.600h3.600z" fill="#4a6ee0" stroke="#1f3388" stroke-width="1.200" stroke-linejoin="round"/><path d="M7.100 3.700v3.400h-3.400" stroke="#b8c9ff" stroke-width="1" fill="none"/></svg>
<span class="t" style="left:393.6px;top:93.4px;font-size:12px;letter-spacing:-0.300px;color:#000;transform:scaleX(0.9840);transform-origin:0 0;">Вставить кадр...</span>
<span class="t" style="left:606.8px;top:93.4px;font-size:12px;letter-spacing:-0.300px;color:#000;transform:scaleX(0.8608);transform-origin:0 0;">INSERT</span>
<svg class="b" style="left:371.0px;top:112.5px" width="16" height="16" viewBox="0 0 16 16"><path d="M3.500 2.500q3.500 3 4.500 4.500 1-1.500 4.500-4.500-2.700 3.500-3.600 5.500 .9 2 3.600 5.500-3.500-3-4.500-4.500-1 1.500-4.500 4.500 2.700-3.500 3.600-5.500-.9-2-3.600-5.500z" fill="#7a3a34" stroke="#6a2a26" stroke-width="1" stroke-linejoin="round"/></svg>
<span class="t" style="left:393.6px;top:115.4px;font-size:12px;letter-spacing:-0.300px;color:#a2a2a2;transform:scaleX(0.9915);transform-origin:0 0;">Удалить кадр</span>
<span class="t" style="left:605.3px;top:115.4px;font-size:12px;letter-spacing:-0.300px;color:#a2a2a2;transform:scaleX(0.8455);transform-origin:0 0;">DELETE</span>
<svg class="b" style="left:371.0px;top:143.5px" width="16" height="16" viewBox="0 0 16 16"><path d="M6.600 3.400h5.800l-.9 5.200h-4z" fill="#e8d4aa" stroke="#3c3222" stroke-width=".8"/><ellipse cx="9.500" cy="3.300" rx="2.900" ry="1.700" fill="#b01414" stroke="#3c3222" stroke-width=".7"/><path d="M.6 6.500h6.500l-1 5.600h-4.500z" fill="#e8d4aa" stroke="#3c3222" stroke-width=".8"/><ellipse cx="3.850" cy="6.400" rx="3.250" ry="1.900" fill="#18a832" stroke="#3c3222" stroke-width=".7"/><path d="M8.600 10h7.200l-1.200 5.500h-4.800z" fill="#ecd9b2" stroke="#3c3222" stroke-width=".8"/><ellipse cx="12.200" cy="9.900" rx="3.600" ry="2.100" fill="#7090f4" stroke="#3c3222" stroke-width=".7"/><path d="M10.200 11.800l.5 3M2 8.500l.5 3" stroke="#fff6e0" stroke-width=".9"/></svg>
<span class="t" style="left:393.6px;top:146.4px;font-size:12px;letter-spacing:-0.116px;color:#000;">Изменить глубину цвета...</span>
<svg class="b" style="left:371.0px;top:165.5px" width="16" height="16" viewBox="0 0 16 16"><rect x=".5" y="1" width="10.500" height="10" fill="#eaeaea" stroke="#8c8c8c"/><rect x="1.500" y="2" width="8.500" height="8" fill="#3f9bf2"/><path d="M1.500 10v-4l2.500-1.500 2 2.500 1.500-1 2.500 4z" fill="#2c9a2c"/><circle cx="3" cy="3.500" r="1" fill="#ffe83a"/><path d="M15.500 .8v14.700h-14.700z" fill="#8edc86" fill-opacity=".85" stroke="#3f9a3c" stroke-width="1"/><path d="M12.300 7.500v5h-5z" fill="#d8f2d4" stroke="#3f9a3c" stroke-width=".8"/></svg>
<span class="t" style="left:393.6px;top:168.4px;font-size:12px;letter-spacing:-0.169px;color:#000;">Изменить размер...</span>
<svg class="b" style="left:371.0px;top:187.5px" width="16" height="16" viewBox="0 0 16 16"><g transform="translate(8 8)"><g fill="#efcaa0" stroke="#a97f52" stroke-width=".7"><rect x="-1.800" y="-7.800" width="3.600" height="15.600" rx="1"/><rect x="-1.800" y="-7.800" width="3.600" height="15.600" rx="1" transform="rotate(45)"/><rect x="-1.800" y="-7.800" width="3.600" height="15.600" rx="1" transform="rotate(90)"/><rect x="-1.800" y="-7.800" width="3.600" height="15.600" rx="1" transform="rotate(135)"/></g><circle r="5.500" fill="#f3d3ad"/><path d="M-5.500 0a5.500 5.500 0 0 0 11 0z" fill="#e6b98a"/><circle r="3.400" fill="#d9a878"/><circle r="1.700" fill="#f4f4f4" stroke="#8f6a44" stroke-width=".7"/><path d="M-3.800 -2.500a4.500 4.500 0 0 1 4 -2.200" stroke="#fff3e0" stroke-width="1" fill="none"/></g></svg>
<span class="t" style="left:393.6px;top:190.4px;font-size:12px;letter-spacing:-0.052px;color:#000;">Изменить скорость анимации...</span>
<svg class="b" style="left:371.0px;top:209.5px" width="16" height="16" viewBox="0 0 16 16"><path d="M2.800 2.900h6.200v-1.900l5.200 3.100-5.200 3.100v-1.900h-6.200z" fill="#4a6fe0" stroke="#22388e" stroke-width=".9" stroke-linejoin="round"/><path d="M13.200 10.900h-6.200v-1.900l-5.200 3.100 5.200 3.100v-1.900h6.200z" fill="#6a8cf0" stroke="#22388e" stroke-width=".9" stroke-linejoin="round"/><path d="M3.500 3.500h5.500" stroke="#c2d0ff" stroke-width=".8"/><path d="M7.300 11.500h5.300" stroke="#dbe4ff" stroke-width=".8"/></svg>
<span class="t" style="left:393.6px;top:212.4px;font-size:12px;letter-spacing:-0.071px;color:#000;">Обратный порядок кадров</span>
<svg class="b" style="left:371.0px;top:240.0px" width="16" height="16" viewBox="0 0 16 16"><path d="M2.400 4l.3 6" stroke="#e07a1a" stroke-width="3.300" stroke-linecap="round"/><path d="M2.700 10.500l.2 1.800" stroke="#8a4a10" stroke-width="1.500" stroke-linecap="round"/><path d="M8 4.800l-1.600 5.800" stroke="#f2dc18" stroke-width="3.300" stroke-linecap="round"/><path d="M6.300 11l-.5 1.600" stroke="#a87a10" stroke-width="1.500" stroke-linecap="round"/><path d="M13.500 8l-3.300 4.300" stroke="#6cc82c" stroke-width="3.300" stroke-linecap="round"/><path d="M9.900 12.800l-.9 1.200" stroke="#8a6a20" stroke-width="1.500" stroke-linecap="round"/></svg>
<span class="t" style="left:393.6px;top:242.9px;font-size:12px;letter-spacing:-0.074px;color:#fff;">Использовать текущий для</span>
<svg class="b" style="left:371.0px;top:262.0px" width="16" height="16" viewBox="0 0 16 16"><circle cx="3.2" cy="8.4" r="2.6" fill="#f39a5b"/><circle cx="2.6" cy="7.6" r="1" fill="#fcd4b4"/><path d="M6.6 5.2q2.2 3.2 0 6.4" fill="none" stroke="#ee8950" stroke-width="1.5"/><path d="M8.8 3.4q3.6 5 0 10" fill="none" stroke="#ee8950" stroke-width="1.7"/><path d="M11.2 1.6q5.2 6.8 0 13.6" fill="none" stroke="#ec7d42" stroke-width="1.9"/></svg>
<span class="t" style="left:393.6px;top:264.9px;font-size:12px;letter-spacing:-0.005px;color:#000;">Добавить в онлайн-библиотеку</span>
<span class="t" style="left:597.4px;top:264.9px;font-size:12px;letter-spacing:-0.300px;color:#000;transform:scaleX(0.9633);transform-origin:0 0;">CTRL+W</span>
<svg class="b" style="left:654.5px;top:243.5px;" width="5" height="8" viewBox="0 0 5 8"><path d="M0 0l4.600 4-4.600 4z" fill="#fff"/></svg>
<div class="b" style="left:663.3px;top:234.5px;width:203.7px;height:336px;background:#f2f2f2;border:1px solid #a0a0a0;box-shadow:3px 3px 4px rgba(0,0,0,.5);"></div>
<div class="b" style="left:664.3px;top:235.5px;width:2px;height:334px;background:#fbfbfb;"></div>
<div class="b" style="left:666px;top:237.4px;width:198px;height:21.6px;background:#0078d7;"></div>
<span class="t" style="left:691.3px;top:242.9px;font-size:12px;letter-spacing:-0.064px;color:#fff;">Обычный указатель</span>
<span class="t" style="left:691.3px;top:264.9px;font-size:12px;letter-spacing:-0.038px;color:#000;">Выбор справки</span>
<span class="t" style="left:691.3px;top:286.9px;font-size:12px;letter-spacing:0.148px;color:#000;">Фоновый режим</span>
<span class="t" style="left:691.3px;top:308.9px;font-size:12px;letter-spacing:-0.200px;color:#000;">Система недоступна</span>
<span class="t" style="left:691.3px;top:330.9px;font-size:12px;letter-spacing:-0.150px;color:#000;">Графическое выделение</span>
<span class="t" style="left:691.3px;top:352.9px;font-size:12px;letter-spacing:-0.240px;color:#000;">Выбор текста</span>
<span class="t" style="left:691.3px;top:374.9px;font-size:12px;letter-spacing:0.009px;color:#000;">Рукописный ввод</span>
<span class="t" style="left:691.3px;top:396.9px;font-size:12px;letter-spacing:-0.059px;color:#000;">Операция невозможна</span>
<span class="t" style="left:691.3px;top:418.9px;font-size:12px;letter-spacing:-0.122px;color:#000;">Вертикальные размеры</span>
<span class="t" style="left:691.3px;top:440.9px;font-size:12px;letter-spacing:-0.009px;color:#000;">Горизонтальные размеры</span>
<span class="t" style="left:691.3px;top:462.9px;font-size:12px;letter-spacing:0.033px;color:#000;">Диагональные размеры \</span>
<span class="t" style="left:691.3px;top:484.9px;font-size:12px;letter-spacing:-0.048px;color:#000;">Диагональные размеры /</span>
<span class="t" style="left:691.3px;top:506.9px;font-size:12px;letter-spacing:0.012px;color:#000;">Перемещение</span>
<span class="t" style="left:691.3px;top:528.9px;font-size:12px;letter-spacing:-0.185px;color:#000;">Специальное выделение</span>
<span class="t" style="left:691.3px;top:550.9px;font-size:12px;letter-spacing:0.058px;color:#000;">Выбор ссылки</span>
<svg class="b" style="left:667px;top:239.5px;" width="16" height="16" viewBox="0 0 16 16"><path d="M4 6.500h5.500v2h-3v-1h-2.500z" fill="#000"/></svg>
<svg class="b" style="left:667px;top:261.5px;" width="16" height="16" viewBox="0 0 16 16"><path d="M2.500 1.500v8l2-2 1.500 3 1-.5-1.500-3h2.500z" fill="#fff" stroke="#8c8c8c" stroke-width=".800"/><path d="M9.500 7.500q0-1.500 1.500-1.500t1.500 1.500q0 1-1.500 1.500v1M11 11.500v1" stroke="#8c8c8c" stroke-width=".900" fill="none"/></svg>
<svg class="b" style="left:667px;top:283.5px;" width="16" height="16" viewBox="0 0 16 16"><path d="M2.500 5.500v8l2-2 1.500 3 1-.5-1.500-3h2.500z" fill="#fff" stroke="#8c8c8c" stroke-width=".800"/><circle cx="9.500" cy="4.500" r="2.800" fill="none" stroke="#1e9be8" stroke-width="1.600"/></svg>
<svg class="b" style="left:667px;top:305.5px;" width="16" height="16" viewBox="0 0 16 16"><circle cx="9.600" cy="8.400" r="4.100" fill="none" stroke="#1e9be8" stroke-width="2.200"/></svg>
<svg class="b" style="left:667px;top:327.5px;" width="16" height="16" viewBox="0 0 16 16"><path d="M6.500 2v9M2 6.500h9" stroke="#555" stroke-width="1"/></svg>
<svg class="b" style="left:667px;top:349.5px;" width="16" height="16" viewBox="0 0 16 16"><path d="M5 3.500h3M5 10.500h3M6.500 3.500v7" stroke="#555" stroke-width=".900"/></svg>
<svg class="b" style="left:667px;top:371.5px;" width="16" height="16" viewBox="0 0 16 16"><path d="M2 2.500l2-1 9.500 9-2 2.500z" fill="#fff" stroke="#8c8c8c" stroke-width=".800"/></svg>
<svg class="b" style="left:667px;top:393.5px;" width="16" height="16" viewBox="0 0 16 16"><circle cx="6" cy="6.500" r="3.600" fill="#fff" stroke="#e0141e" stroke-width="1.500"/><path d="M3.500 4l5 5" stroke="#e0141e" stroke-width="1.500"/></svg>
<svg class="b" style="left:667px;top:415.5px;" width="16" height="16" viewBox="0 0 16 16"><path d="M4.600 1.500l2 2.500h-1.400v5h1.400l-2 2.500-2-2.500h1.400v-5h-1.400z" fill="#fff" stroke="#8c8c8c" stroke-width=".800"/></svg>
<svg class="b" style="left:667px;top:433.0px;" width="16" height="16" viewBox="0 0 16 16"><path d="M2 7.500l2.500-2v1.400h5v-1.400l2.500 2-2.500 2v-1.400h-5v1.400z" fill="#fff" stroke="#8c8c8c" stroke-width=".800"/></svg>
<svg class="b" style="left:667px;top:458.5px;" width="16" height="16" viewBox="0 0 16 16"><path d="M2 2h3.500l-1 1 4.500 4.500 1-1v3.500h-3.500l1-1-4.500-4.500-1 1z" fill="#fff" stroke="#8c8c8c" stroke-width=".800"/></svg>
<svg class="b" style="left:667px;top:481.0px;" width="16" height="16" viewBox="0 0 16 16"><path d="M10 2h-3.500l1 1-4.500 4.500-1-1v3.500h3.500l-1-1 4.500-4.500 1 1z" fill="#fff" stroke="#8c8c8c" stroke-width=".800"/></svg>
<svg class="b" style="left:667px;top:503.5px;" width="16" height="16" viewBox="0 0 16 16"><path d="M7 1.500l5.500 5.500-5.500 5.500-5.500-5.500z" fill="#fff" stroke="#8c8c8c" stroke-width=".800"/><path d="M7 3v8M3 7h8M4.800 4.800l4.400 4.400M9.200 4.800l-4.400 4.400" stroke="#8c8c8c" stroke-width=".600"/></svg>
<svg class="b" style="left:667px;top:525.0px;" width="16" height="16" viewBox="0 0 16 16"><path d="M4.600 1.500l2.200 3h-1.500v6h-1.400v-6h-1.500z" fill="#fff" stroke="#8c8c8c" stroke-width=".800"/></svg>
<svg class="b" style="left:667px;top:547.5px;" width="16" height="16" viewBox="0 0 16 16"><path d="M5 2q1 0 1 1v3l3.500 .8q1 .3 .8 1.400l-.6 3.300h-4.700l-2-3.500q-.3-.8 .6-.8l.6 .5v-4.700q0-1 .8-1z" fill="#fff" stroke="#8c8c8c" stroke-width=".800"/></svg>
<div class="b" style="left:361.2px;top:231px;width:499.8px;height:31px;border:3.200px solid #fb0a12;border-radius:10.500px;box-shadow:0 0 0 1.500px #fff,inset 0 0 0 1.500px #fff,0 3px 4px 1px rgba(0,0,0,.42),inset 1px 3px 3px 1px rgba(0,0,0,.5);"></div>
</body></html>
